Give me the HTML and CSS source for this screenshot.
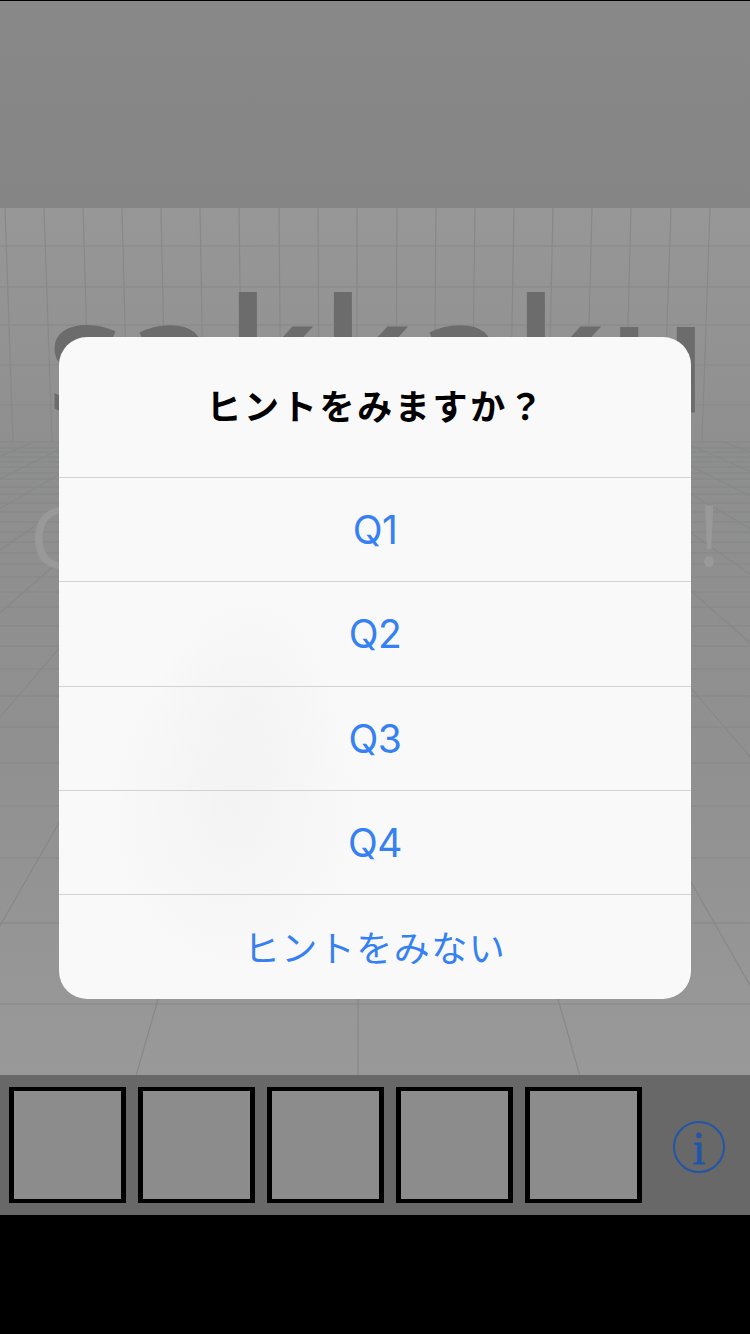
FILE: index.html
```html
<!DOCTYPE html>
<html lang="ja">
<head>
  <meta charset="UTF-8" />
  <meta name="viewport" content="width=device-width, initial-scale=1.0"/>
  <title>sakkaku</title>
  <link rel="stylesheet" href="styles.css">
</head>
<body>
  <div class="page">
    <div class="top-band"></div>

    <svg class="scene" viewBox="0 208 750 867" aria-hidden="true">
      <defs>
        <linearGradient id="wall" x1="0" y1="0" x2="0" y2="1">
          <stop offset="0" stop-color="#979797"/>
          <stop offset="1" stop-color="#8f8f8f"/>
        </linearGradient>
        <linearGradient id="floor" x1="0" y1="0" x2="0" y2="1">
          <stop offset="0" stop-color="#8d8e8d"/>
          <stop offset="0.5" stop-color="#8f908f"/>
          <stop offset="1" stop-color="#999999"/>
        </linearGradient>
      </defs>
      <rect x="0" y="208" width="750" height="234" fill="url(#wall)"/>
      <rect x="0" y="442" width="750" height="633" fill="url(#floor)"/>

      <!-- wall grid -->
      <path class="grid" d="M0 246H750 M0 287H750 M0 325H750 M0 365H750 M0 405H750 M0 442H750
        M5 208L13 442 M44 208L52 442 M83 208L90 442 M122 208L128 442 M161 208L166 442
        M200 208L204 442 M239 208L242 442 M279 208L281 442 M318 208L319 442 M357 208L357 442
        M397 208L396 442 M436 208L434 442 M475 208L472 442 M514 208L510 442 M553 208L548 442
        M592 208L586 442 M631 208L625 442 M671 208L663 442 M710 208L702 442"/>

      <!-- floor grid -->
      <path class="grid-fine" d="M0 448H750 M0 452H750 M0 457H750 M0 462H750 M0 467H750 M0 473H750
        M0 479H750 M0 487H750 M0 494H750 M0 503H750 M0 512H750 M0 522H750 M0 532H750 M0 542H750
        M0 553H750 M0 564H750 M0 577H750 M0 592H750 M0 607H750 M0 626H750 M0 646H750 M0 669H750
        M0 696H750 M0 727H750 M0 763H750 M0 806H750 M0 858H750 M0 923H750 M0 1004H750"/>
      <path class="grid" d="M358 442V1075
        M317.4 442L136.3 1075 M398.6 442L579.7 1075
        M276.8 442L-85.4 1075 M439.2 442L801.4 1075
        M236.2 442L-307.1 1075 M479.8 442L1023.1 1075
        M195.6 442L-528.8 1075 M520.4 442L1244.8 1075
        M155 442L-750.5 1075 M561 442L1466.5 1075
        M114.4 442L-972.2 1075 M601.6 442L1688.2 1075
        M73.8 442L-1193.9 1075 M642.2 442L1909.9 1075
        M33.2 442L-1415.6 1075 M682.8 442L2131.6 1075
        M-7.4 442L-1637.3 1075 M723.4 442L2353.3 1075"/>

      <text class="logo" x="47 124 226 321 414 514 608" y="412">sakkaku</text>
      <text class="sub" x="30" y="568">C</text>
      <text class="sub" x="698" y="566">!</text>
    </svg>

    <div class="tray">
      <div class="slot"></div>
      <div class="slot"></div>
      <div class="slot"></div>
      <div class="slot"></div>
      <div class="slot"></div>
      <div class="info">i</div>
    </div>
    <div class="bottom-bar"></div>
  </div>

  <div class="overlay">
    <div class="dialog">
      <div class="dialog-title">ヒントをみますか？</div>
      <div class="dialog-btn">Q1</div>
      <div class="dialog-btn">Q2</div>
      <div class="dialog-btn">Q3</div>
      <div class="dialog-btn">Q4</div>
      <div class="dialog-btn dialog-btn-jp">ヒントをみない</div>
    </div>
  </div>
</body>
</html>
```

FILE: styles.css
```css
* {
  box-sizing: border-box;
}
body {
  margin: 0;
  background: #000;
  font-family: "Noto Sans CJK JP", sans-serif;
}
.page {
  position: relative;
  display: flex;
  flex-direction: column;
  width: 750px;
  height: 1334px;
  overflow: hidden;
}
.top-band {
  height: 208px;
  border-top: 1px solid #000;
  background: linear-gradient(#888888, #858585);
}
.scene {
  display: block;
  width: 750px;
  height: 867px;
}
.grid {
  fill: none;
  stroke: #878888;
  stroke-width: 1.2;
}
.grid-fine {
  fill: none;
  stroke: #868787;
  stroke-width: 1.2;
}
.logo {
  font-family: "Open Sans", sans-serif;
  font-size: 157px;
  font-weight: 600;
  fill: #6c6c6c;
}
.sub {
  font-family: "Open Sans", sans-serif;
  font-size: 84px;
  fill: #989998;
}
.tray {
  display: flex;
  gap: 12px;
  height: 140px;
  padding: 12px 9px;
  background: #686868;
}
.slot {
  width: 117px;
  height: 116px;
  border-style: solid;
  border-color: #000;
  border-width: 4px 5px;
  background: #8c8c8c;
}
.info {
  display: flex;
  align-items: center;
  justify-content: center;
  align-self: center;
  width: 52px;
  height: 52px;
  margin: 4px 0 0 19px;
  padding-top: 3px;
  border: 2px solid #2155a8;
  border-radius: 50%;
  color: #2155a8;
  font-family: "Liberation Serif", serif;
  font-size: 46px;
  line-height: 1;
  -webkit-text-stroke: 0.8px #2155a8;
}
.bottom-bar {
  height: 119px;
  background: #000;
}

/* alert over the game */
.overlay {
  position: absolute;
  top: 0;
  left: 0;
  display: flex;
  justify-content: center;
  width: 750px;
  padding-top: 337px;
}
.dialog {
  display: flex;
  flex-direction: column;
  width: 632px;
  height: 662px;
  border-radius: 28px;
  overflow: hidden;
  background:
    radial-gradient(ellipse 130px 170px at 175px 470px, #f3f3f3, rgba(243, 243, 243, 0)),
    radial-gradient(ellipse 90px 120px at 190px 370px, #f5f5f5, rgba(245, 245, 245, 0)),
    #f9f9f9;
}
.dialog-title {
  height: 140px;
  padding: 42px 0 0 2px;
  color: #000;
  font-size: 35px;
  font-weight: bold;
  letter-spacing: 2.7px;
  line-height: 52px;
  text-align: center;
}
.dialog-btn {
  display: flex;
  flex: 1;
  align-items: center;
  justify-content: center;
  border-top: 1px solid #d2d2d2;
  color: #3580f3;
  font-family: Inter, sans-serif;
  font-size: 39px;
  letter-spacing: -0.5px;
}
.dialog-btn-jp {
  flex: none;
  height: 105px;
  padding-bottom: 3px;
  font-family: "Noto Sans CJK JP", sans-serif;
  font-size: 36px;
  letter-spacing: 1.5px;
}
```
